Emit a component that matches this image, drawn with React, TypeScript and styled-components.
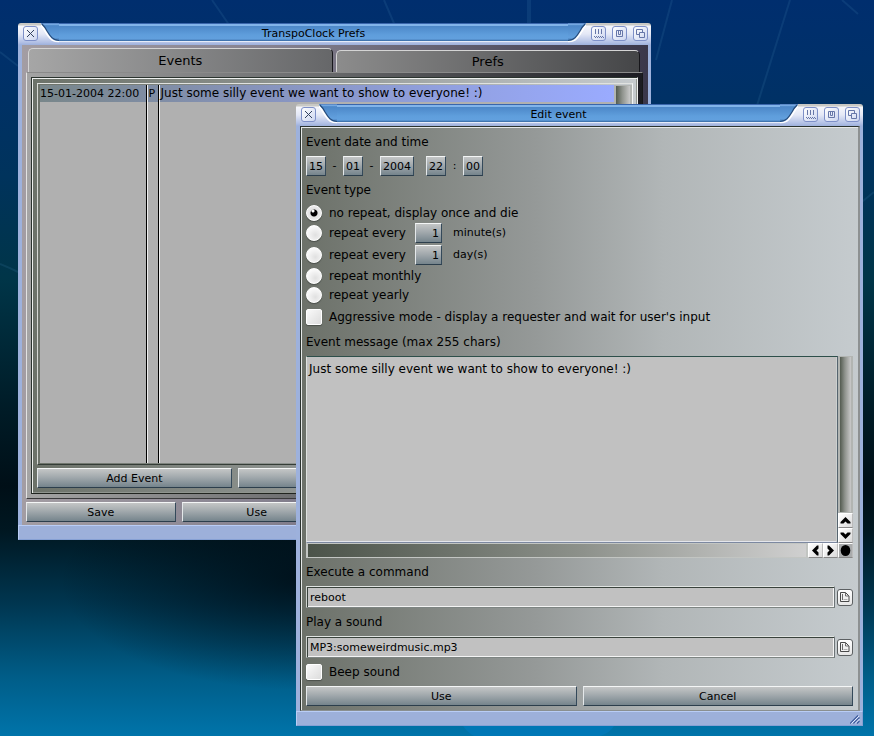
import React from "react";
import styled, { createGlobalStyle, css } from "styled-components";

const GlobalStyle = createGlobalStyle`
  * { box-sizing: border-box; }
  html, body, #root { height: 100%; }
  body {
    margin: 0;
    overflow: hidden;
    color: #000;
    font: 11px/16px "DejaVu Sans", Verdana, sans-serif;
  }
  button, input, textarea { font: inherit; color: inherit; margin: 0; padding: 0; border-radius: 0; outline: none; }
`;

const Desktop = styled.main`
  position: relative;
  min-height: 100vh;
  overflow: hidden;
  background:
    radial-gradient(ellipse 240px 110px at 300px 580px, rgba(0, 8, 14, 0.7), transparent),
    linear-gradient(
      180deg,
      #002e6e 0%, #00306a 8%, #00335c 24%, #003548 38%, #001b26 56%,
      #000f17 66%, #001721 72%, #003650 82%, #005d88 92%, #0074aa 100%
    );
`;

const Wallpaper = styled.svg`
  position: absolute;
  inset: 0;
  width: 100%;
  height: 100%;
`;

const WindowFrame = styled.section<{ $x: number; $y: number; $right: number }>`
  position: absolute;
  left: ${(p) => p.$x}px;
  top: ${(p) => p.$y}px;
  right: ${(p) => p.$right}px;
  display: flex;
  flex-direction: column;
`;

const TitleBar = styled.header`
  display: flex;
  height: 22px;
  border-radius: 3px 3px 0 0;
  background: linear-gradient(#c8c8c4 0 2px, #f6f7fc 3px, #e4e8f6 11px, #b4c2e6 19px, #9db0dc 22px);
`;

const TitleGroup = styled.div`
  display: flex;
  align-items: center;
  gap: 6px;
  padding: 0 3px 1px 5px;
`;

const TitleButton = styled.button`
  display: grid;
  place-items: center;
  width: 15px;
  height: 15px;
  border: 1px solid #7e90c8;
  border-radius: 3px;
  background: linear-gradient(135deg, #fff, #cdd6f0);
`;

const TitleCurve = styled.svg`
  flex: none;
  width: 18px;
  height: 20px;
`;

const Title = styled.h1`
  flex: 1;
  height: 20px;
  margin: 0;
  text-align: center;
  font-size: 11px;
  font-weight: normal;
  line-height: 21px;
  background: linear-gradient(#3a66ac 0 1px, #82b4ea 1px 3px, #4c87c8 3px, #5f9edc 12px, #62a0de 16px, #34659f 18px, #e6ecf8 18px 19px, #b4c2e6 19px);
`;

const WindowBody = styled.div`
  border: solid #9db1dc;
  border-width: 0 3px 0 4px;
  box-shadow: inset 1px 0 #c4d2f2;
`;

const WindowFoot = styled.footer`
  display: flex;
  justify-content: flex-end;
  align-items: center;
  height: 15px;
  padding: 0 2px;
  background: #9db0da;
  border: 1px solid #86a0d4;
  border-top-color: #b9cdf6;
  border-left-color: #b9cdf6;
`;

const BevelButton = styled.button`
  height: 20px;
  border: 1px solid;
  border-color: #f4f6f6 #34495a #2c3e4c #e4e8ea;
  background: linear-gradient(#c4c6c6, #a2a9ad 45%, #75848c);
  text-align: center;
  line-height: 17px;
`;

const ButtonRow = styled.div<{ $columns: number }>`
  display: grid;
  grid-template-columns: repeat(${(p) => p.$columns}, 1fr);
  gap: 6px;
`;

/* ---- Preferences window ---- */

const PrefsBody = styled.div`
  padding: 3px 5px 3px 4px;
  background: linear-gradient(90deg, #a39da3, #85818f 40%, #3a374b);
`;

const TabList = styled.div`
  display: flex;
  align-items: flex-end;
  gap: 3px;
  padding: 0 3px 0 2px;
`;

const Tab = styled.button<{ $active?: boolean }>`
  flex: 1;
  border: 1px solid #d4d4d4;
  border-right-color: #16161a;
  border-bottom: 0;
  border-radius: 5px 5px 0 0;
  font-size: 13px;
  ${(p) =>
    p.$active
      ? css`
          height: 24px;
          background: linear-gradient(90deg, #a6a6a6, #666769);
        `
      : css`
          height: 22px;
          background: linear-gradient(90deg, #8c8c8c, #454648);
        `}
`;

const TabPage = styled.div`
  padding: 4px;
  border: 1px solid;
  border-color: #8a8a8a #17171a #3a3a3c #e2e2e2;
  background: linear-gradient(90deg, #a4a4a4, #666769 50%, #1c1c22);
  margin-bottom: 3px;
`;

const Group = styled.div`
  display: grid;
  gap: 3px;
  padding: 5px 4px 5px 5px;
  border: 1px solid #2a332e;
  border-right-color: #f0f0f0;
  border-bottom-color: #20241f;
  box-shadow: inset 1px 1px #eef0ee, inset -1px -1px #90958f;
  background: linear-gradient(90deg, #6c7269, #949997 50%, #c6cbce);
`;

const EventList = styled.div`
  display: grid;
  grid-template-columns: 1fr 18px;
  height: 382px;
  padding: 1px 0 1px 2px;
  border: 1px solid;
  border-color: #e0e2e0 #f2f4f4 #343c36 #d6d8d4;
`;

const EventTable = styled.table`
  width: 100%;
  height: 100%;
  border-collapse: collapse;
  table-layout: fixed;
  background: #b0b0b0;

  td {
    padding: 0;
    white-space: nowrap;
    overflow: hidden;
    line-height: 17px;
  }
  td + td {
    border-left: 1px solid #000;
    box-shadow: inset 1px 0 #eee;
    padding-left: 2px;
  }
`;

const MessageCell = styled.td`
  font-size: 12px;
`;

const SelectedRow = styled.tr`
  height: 17px;
  background: linear-gradient(90deg, #78868a, #8794be 40%, #9aabff);
`;

const VerticalTrack = styled.div`
  border: solid #b2b5b2;
  border-width: 1px 2px;
  background: linear-gradient(90deg, #535b50, #8f938d 45%, #c9c9c9);
`;

/* ---- Event editor window ---- */

const EditorForm = styled.form`
  display: flex;
  flex-direction: column;
  padding: 5px 5px 4px;
  border: 1px solid #2b332e;
  border-right: 2px solid #8d9192;
  border-bottom-color: #8a8f90;
  box-shadow: inset 1px 1px #e6e9e8;
  background: linear-gradient(90deg, #6c7169, #959998 42%, #b1b6b7 65%, #c5cbce);
`;

const Caption = styled.label`
  display: block;
  font-size: 12px;
  line-height: 20px;
  margin-bottom: 4px;
`;

const FieldSet = styled.fieldset`
  min-width: 0;
  margin: 0;
  padding: 0;
  border: 0;
`;

const Legend = styled.legend`
  padding: 0;
  font-size: 12px;
  line-height: 20px;
`;

const DateRow = styled.div`
  display: flex;
  align-items: center;
  margin: 4px 0;
`;

const BevelInput = styled.input<{ $width: number; $right?: boolean }>`
  width: ${(p) => p.$width}px;
  height: 20px;
  border: 1px solid;
  border-color: #f4f6f6 #34495a #2c3e4c #e4e8ea;
  background: linear-gradient(#c4c6c6, #a2a9ad 45%, #75848c);
  text-align: ${(p) => (p.$right ? "right" : "center")};
  padding-right: ${(p) => (p.$right ? 2 : 0)}px;
`;

const Separator = styled.span<{ $width: number }>`
  width: ${(p) => p.$width}px;
  text-align: center;
`;

const OptionList = styled.div`
  padding: 3px 0;
`;

const Section = styled.div`
  margin: 5px 0 4px;
`;

const OptionRow = styled.div<{ $height: number }>`
  display: flex;
  align-items: center;
  height: ${(p) => p.$height}px;
`;

const OptionLabel = styled.label`
  padding-left: 7px;
  font-size: 12px;
`;

const RepeatLabel = styled(OptionLabel)`
  width: 93px;
`;

const UnitLabel = styled.span`
  padding-left: 11px;
`;

const Radio = styled.input.attrs({ type: "radio" })`
  appearance: none;
  width: 16px;
  height: 16px;
  border-radius: 50%;
  border: 1px solid #fff;
  background: radial-gradient(circle at 60% 65%, #e0e0e0, #fafafa 70%);
  box-shadow: 0 1px 1px #4b504b;

  &:checked {
    background: radial-gradient(circle at 6px 5px, #fff 0 1px, transparent 2px),
      radial-gradient(circle at 7px 7px, #000 0 3px, #e2e2e2 4px, #f2f2f2);
  }
`;

const CheckBox = styled.input.attrs({ type: "checkbox" })`
  appearance: none;
  width: 16px;
  height: 16px;
  border-radius: 2px;
  border: 1px solid #fff;
  background: linear-gradient(135deg, #fafafa, #dcdcdc);
  box-shadow: 0 1px 1px #4b504b;

  &:checked {
    background: #333;
  }
`;

const EditorGrid = styled.div`
  display: grid;
  grid-template-columns: 1fr 15px;
  grid-template-rows: 187px 15px;
  margin-bottom: 4px;
`;

const Message = styled.textarea`
  width: 100%;
  height: 100%;
  padding: 4px 2px;
  resize: none;
  overflow: hidden;
  border: 1px solid;
  border-color: #2d4f4a #56646f #7c88a0 #dfe2e0;
  background: #c1c1c1;
  box-shadow: inset -1px 0 #ccd0cf, inset 0 -1px #e4e6ec;
  && {
    font-size: 12px;
  }
`;

const VerticalBar = styled.div`
  display: grid;
  grid-template-rows: 1fr 15px 15px;
`;

const HorizontalBar = styled.div`
  display: grid;
  grid-template-columns: 1fr 15px 15px;
`;

const HorizontalTrack = styled.div`
  border: solid #c2c5c2;
  border-width: 1px 2px;
  background: linear-gradient(90deg, #4b5349, #8d918b 55%, #d0d0d0);
`;

const ArrowButton = styled.button<{ $dark?: boolean }>`
  display: grid;
  place-items: center;
  border: 1px solid;
  border-color: #fff #bbb #888 #fff;
  background: ${(p) => (p.$dark ? "#a9abac" : "linear-gradient(135deg, #fff, #dadada)")};
`;

const PathRow = styled.div`
  display: grid;
  grid-template-columns: 1fr 16px;
  align-items: center;
  gap: 2px;
  margin-bottom: 4px;
`;

const PathInput = styled.input`
  min-width: 0;
  height: 22px;
  padding: 0 3px;
  border: 1px solid;
  border-color: #e0e4e2 #6d7477 #7d8482 #cfd3d0;
  background: #c1c1c1;
  box-shadow: inset 1px 1px #39423c, inset -1px -1px #f4f4f4;
`;

const PopupButton = styled.button`
  display: grid;
  place-items: center;
  width: 16px;
  height: 17px;
  border: 1px solid #5c6062;
  border-radius: 3px;
  background: linear-gradient(#fff, #e6e6e6);
`;

const CloseIcon = () => (
  <svg width="9" height="9" viewBox="0 0 9 9" stroke="#33415f" strokeWidth="1" fill="none">
    <path d="M1 1l7 7M8 1l-7 7" />
  </svg>
);
const IconifyIcon = () => (
  <svg width="11" height="11" viewBox="0 0 11 11" stroke="#6676a8" fill="none">
    <path d="M2.500 1v5M5.500 1v5M8.500 1v5" />
    <path d="M1 8.500h9M2 9.500h9" strokeDasharray="1 1" />
  </svg>
);
const ZoomIcon = () => (
  <svg width="9" height="9" viewBox="0 0 9 9" stroke="#6676a8" fill="none">
    <path d="M1.500 1.500h6v6h-6zM5.500 2v3.500h-2V2" />
  </svg>
);
const DepthIcon = () => (
  <svg width="11" height="11" viewBox="0 0 11 11" stroke="#6676a8" fill="none">
    <path d="M4.500 6.500h-3v-5h6v3M4.500 4.500h5v5h-5z" />
  </svg>
);
const PopupIcon = () => (
  <svg width="12" height="12" viewBox="0 0 12 12" stroke="#4a4a4a" fill="none">
    <path d="M1.500 1.500h5l3.500 3.500v5.500h-8.500z" fill="#f2f2f2" />
    <path d="M6.500 1.500v3.500h3.500M3.500 3v6" stroke="#6c6c6c" />
    <path d="M4.500 8.500h4" stroke="#b0b0b0" />
  </svg>
);
const rotations = { up: 0, right: 90, down: 180, left: 270 };
const Chevron = ({ to }: { to: keyof typeof rotations }) => (
  <svg width="11" height="11" viewBox="0 0 11 11">
    <path d="M5.500 2L10.500 7v1.500H7.500l-2-2-2 2H.5V7z" transform={`rotate(${rotations[to]} 5.500 5.500)`} />
  </svg>
);
const DotIcon = () => (
  <svg width="11" height="11" viewBox="0 0 11 11">
    <ellipse cx="5.500" cy="5.500" rx="4.800" ry="5.500" />
  </svg>
);

const Curve = ({ id, flip }: { id: string; flip?: boolean }) => (
  <TitleCurve viewBox="0 0 18 20" aria-hidden="true">
    <defs>
      <linearGradient id={id} x1="0" y1="0" x2="0" y2="1">
        <stop offset="0" stopColor="#3a66ac" />
        <stop offset=".06" stopColor="#82b4ea" />
        <stop offset=".15" stopColor="#4c87c8" />
        <stop offset=".8" stopColor="#62a0de" />
        <stop offset="1" stopColor="#3d70ac" />
      </linearGradient>
    </defs>
    <g transform={flip ? "translate(18 0) scale(-1 1)" : undefined}>
      <path d="M0 2C4 7 6 13 11 17Q14 18.500 18 18.500" fill="none" stroke="#fff" strokeWidth="1.500" />
      <path d="M0 0H18V18C11 18 9 13 6 8Q4 4 0 1Z" fill={`url(#${id})`} />
      <path d="M1 1Q4 4 6 8C9 13 12 17.500 18 17.500" fill="none" stroke="#264a78" strokeWidth="1.200" />
    </g>
  </TitleCurve>
);

type DeskWindowProps = {
  id: string;
  title: string;
  x: number;
  y: number;
  right: number;
  sizer?: boolean;
  children: React.ReactNode;
};

const DeskWindow = ({ id, title, x, y, right, sizer, children }: DeskWindowProps) => (
  <WindowFrame $x={x} $y={y} $right={right} aria-label={title}>
    <TitleBar>
      <TitleGroup>
        <TitleButton aria-label="Close"><CloseIcon /></TitleButton>
      </TitleGroup>
      <Curve id={`${id}-left`} />
      <Title>{title}</Title>
      <Curve id={`${id}-right`} flip />
      <TitleGroup>
        <TitleButton aria-label="Iconify"><IconifyIcon /></TitleButton>
        <TitleButton aria-label="Zoom"><ZoomIcon /></TitleButton>
        <TitleButton aria-label="Depth"><DepthIcon /></TitleButton>
      </TitleGroup>
    </TitleBar>
    <WindowBody>{children}</WindowBody>
    <WindowFoot>
      {sizer && (
        <svg width="10" height="10" viewBox="0 0 10 10" fill="none">
          <path d="M0 9.500L8 1.500M3.500 9.500L9.500 3.500M7 9.500L9.500 7" stroke="#3d5a9c" strokeWidth="1.200" />
          <path d="M1.500 9.500L9 2M5 9.500L9.500 5" stroke="#dfe8fd" />
        </svg>
      )}
    </WindowFoot>
  </WindowFrame>
);

const PrefsWindow = () => (
  <DeskWindow id="prefs" title="TranspoClock Prefs" x={18} y={23} right={223}>
    <PrefsBody>
      <TabList role="tablist">
        <Tab role="tab" aria-selected="true" $active>Events</Tab>
        <Tab role="tab" aria-selected="false">Prefs</Tab>
      </TabList>
      <TabPage role="tabpanel">
        <Group>
          <EventList>
            <EventTable>
              <colgroup>
                <col width="106" />
                <col width="12" />
                <col />
              </colgroup>
              <tbody>
                <SelectedRow>
                  <td>15-01-2004 22:00</td>
                  <td>P</td>
                  <MessageCell>Just some silly event we want to show to everyone! :)</MessageCell>
                </SelectedRow>
                <tr><td /><td /><td /></tr>
              </tbody>
            </EventTable>
            <VerticalTrack />
          </EventList>
          <ButtonRow $columns={3}>
            <BevelButton>Add Event</BevelButton>
            <BevelButton aria-label="Edit event" />
            <BevelButton aria-label="Delete event" />
          </ButtonRow>
        </Group>
      </TabPage>
      <ButtonRow $columns={4}>
        <BevelButton>Save</BevelButton>
        <BevelButton>Use</BevelButton>
        <BevelButton aria-label="Apply" />
        <BevelButton aria-label="Cancel" />
      </ButtonRow>
    </PrefsBody>
  </DeskWindow>
);

const EditWindow = () => (
  <DeskWindow id="edit" title="Edit event" x={296} y={104} right={11} sizer>
    <EditorForm onSubmit={(e) => e.preventDefault()}>
      <FieldSet>
        <Legend>Event date and time</Legend>
        <DateRow>
          <BevelInput $width={20} aria-label="Day" defaultValue="15" />
          <Separator $width={17}>-</Separator>
          <BevelInput $width={20} aria-label="Month" defaultValue="01" />
          <Separator $width={17}>-</Separator>
          <BevelInput $width={34} aria-label="Year" defaultValue="2004" />
          <Separator $width={12} />
          <BevelInput $width={20} aria-label="Hour" defaultValue="22" />
          <Separator $width={17}>:</Separator>
          <BevelInput $width={20} aria-label="Minute" defaultValue="00" />
        </DateRow>
      </FieldSet>
      <FieldSet>
        <Legend>Event type</Legend>
        <OptionList>
          <OptionRow $height={19}>
            <Radio name="repeat" id="once" defaultChecked />
            <OptionLabel htmlFor="once">no repeat, display once and die</OptionLabel>
          </OptionRow>
          <OptionRow $height={22}>
            <Radio name="repeat" id="minutes" />
            <RepeatLabel htmlFor="minutes">repeat every</RepeatLabel>
            <BevelInput $width={27} $right aria-label="Minutes" defaultValue="1" />
            <UnitLabel>minute(s)</UnitLabel>
          </OptionRow>
          <OptionRow $height={22}>
            <Radio name="repeat" id="days" />
            <RepeatLabel htmlFor="days">repeat every</RepeatLabel>
            <BevelInput $width={27} $right aria-label="Days" defaultValue="1" />
            <UnitLabel>day(s)</UnitLabel>
          </OptionRow>
          <OptionRow $height={19}>
            <Radio name="repeat" id="monthly" />
            <OptionLabel htmlFor="monthly">repeat monthly</OptionLabel>
          </OptionRow>
          <OptionRow $height={19}>
            <Radio name="repeat" id="yearly" />
            <OptionLabel htmlFor="yearly">repeat yearly</OptionLabel>
          </OptionRow>
        </OptionList>
      </FieldSet>
      <OptionRow $height={20}>
        <CheckBox id="aggressive" />
        <OptionLabel htmlFor="aggressive">
          Aggressive mode - display a requester and wait for user's input
        </OptionLabel>
      </OptionRow>
      <Section>
        <Caption htmlFor="message">Event message (max 255 chars)</Caption>
        <EditorGrid>
          <Message id="message" maxLength={255} defaultValue="Just some silly event we want to show to everyone! :)" />
          <VerticalBar>
            <VerticalTrack />
            <ArrowButton type="button" aria-label="Scroll up"><Chevron to="up" /></ArrowButton>
            <ArrowButton type="button" aria-label="Scroll down"><Chevron to="down" /></ArrowButton>
          </VerticalBar>
          <HorizontalBar>
            <HorizontalTrack />
            <ArrowButton type="button" aria-label="Scroll left"><Chevron to="left" /></ArrowButton>
            <ArrowButton type="button" aria-label="Scroll right"><Chevron to="right" /></ArrowButton>
          </HorizontalBar>
          <ArrowButton type="button" $dark aria-label="Pan"><DotIcon /></ArrowButton>
        </EditorGrid>
        <Caption htmlFor="command">Execute a command</Caption>
        <PathRow>
          <PathInput id="command" defaultValue="reboot" />
          <PopupButton type="button" aria-label="Choose command"><PopupIcon /></PopupButton>
        </PathRow>
        <Caption htmlFor="sound">Play a sound</Caption>
        <PathRow>
          <PathInput id="sound" defaultValue="MP3:someweirdmusic.mp3" />
          <PopupButton type="button" aria-label="Choose sound"><PopupIcon /></PopupButton>
        </PathRow>
        <OptionRow $height={20}>
          <CheckBox id="beep" />
          <OptionLabel htmlFor="beep">Beep sound</OptionLabel>
        </OptionRow>
      </Section>
      <ButtonRow $columns={2}>
        <BevelButton>Use</BevelButton>
        <BevelButton type="button">Cancel</BevelButton>
      </ButtonRow>
    </EditorForm>
  </DeskWindow>
);

export default function App() {
  return (
    <>
      <GlobalStyle />
      <Desktop>
        <Wallpaper viewBox="0 0 874 736" preserveAspectRatio="none" aria-hidden="true">
          <g fill="none" stroke="#3d7fae" strokeOpacity=".18" strokeWidth="2">
            <path d="M212 0L234 32M384 0L396 28M528 0V30M530 0V30M672 0L656 60M790 0L740 160M842 0L858 14" />
            <path d="M0 52L18 66M0 264Q10 268 18 272M858 205L874 192" />
          </g>
          <path d="M463 726Q468 733 474 736H600Q610 733 614 726Z" fill="#007cc0" fillOpacity=".6" />
        </Wallpaper>
        <PrefsWindow />
        <EditWindow />
      </Desktop>
    </>
  );
}
